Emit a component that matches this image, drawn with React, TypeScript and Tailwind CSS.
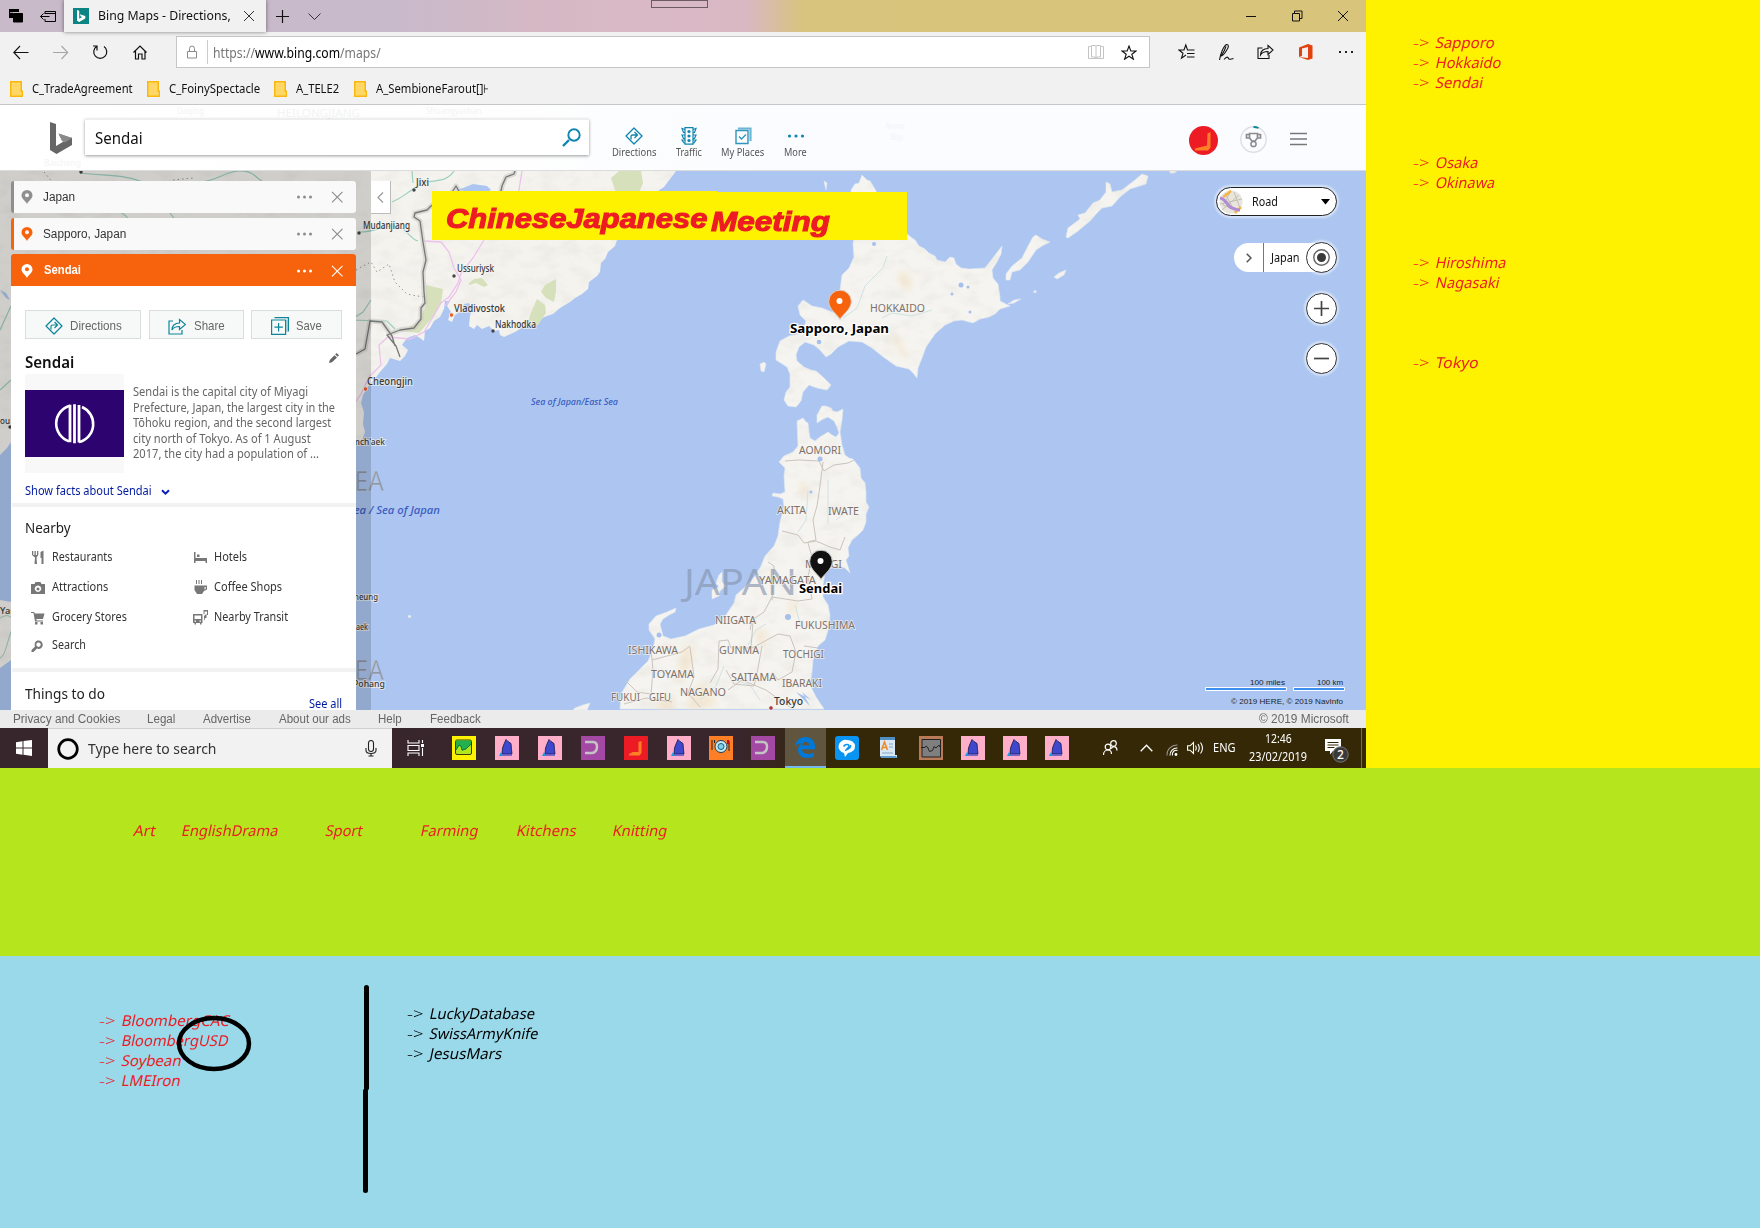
import { useLayoutEffect, useRef, useState } from "react";
import type { ReactNode } from "react";

/** Single-line text squeezed or stretched to an exact width. */
function Fit({ w, className = "", children }: { w: number; className?: string; children: ReactNode }) {
  const ref = useRef<HTMLSpanElement>(null);
  const [scale, setScale] = useState(1);
  useLayoutEffect(() => {
    if (ref.current && ref.current.offsetWidth) setScale(w / ref.current.offsetWidth);
  }, [w, children]);
  return (
    <span className={"block shrink-0 whitespace-nowrap " + className} style={{ width: w }}>
      <span ref={ref} className="inline-block origin-left" style={{ transform: `scaleX(${scale})` }}>
        {children}
      </span>
    </span>
  );
}

function Svg({ w, h, className = "", children }: { w: number; h: number; className?: string; children: ReactNode }) {
  return (
    <svg width={w} height={h} viewBox={`0 0 ${w} ${h}`} fill="none" className={"block shrink-0 " + className}>
      {children}
    </svg>
  );
}

/* ---------- Browser chrome ---------- */

function TitleBar() {
  return (
    <div className="relative flex h-8 items-center bg-[linear-gradient(90deg,#c8bac9_0px,#c9bacb_400px,#d4b8c4_530px,#dab9c6_640px,#d9b8c4_745px,#d8c47c_805px,#d8c57b_1366px)]">
      <Svg w={15} h={14} className="ml-[9px]">
        <path d="M0 0h10v3H4v6H0z" fill="#000" />
        <path d="M4.500 4.500h9v8.500h-9z" fill="#000" stroke="#000" />
        <path d="M1 3.500h8" stroke="#c9bacb" strokeWidth=".8" />
      </Svg>
      <Svg w={16} h={12} className="ml-4">
        <path d="M5 4V1.500h10.500v10H5V9M5 3.500h10M.500 6.500h9M3.500 3.500l-3 3 3 3" stroke="#000" />
      </Svg>
      <div className="ml-2 flex h-8 w-[202px] items-center bg-[#f1f1f1] shadow-[0_0_4px_rgba(0,0,0,0.5)]">
        <Svg w={16} h={16} className="ml-[9px]">
          <path d="M0 0h16v16H0z" fill="#0c8484" />
          <path d="M4 2l2.200.800v8l3-1.700-1.500-.700L6.900 6.200 12.300 8v2.600L6.200 14 4 12.800z" fill="#fff" />
        </Svg>
        <Fit w={133} className="ml-[9px] text-[13px] text-[#111]">Bing Maps - Directions,</Fit>
        <Svg w={10} h={10} className="ml-[13px]">
          <path d="M0 0l10 10M10 0L0 10" stroke="#333" />
        </Svg>
      </div>
      <Svg w={13} h={13} className="ml-2.5">
        <path d="M6.500 0v13M0 6.500h13" stroke="#111" strokeWidth="1.200" />
      </Svg>
      <Svg w={13} h={7} className="ml-[19px]">
        <path d="M.5.5l6 6 6-6" stroke="#333" />
      </Svg>
      <div className="absolute -top-px left-[651px] h-[9px] w-[57px] border border-[#6d5b63]" />
      <div className="absolute left-[651px] top-0 h-px w-[57px] bg-[#6d5b63]" />
      <Svg w={104} h={12} className="ml-auto mr-[17px]">
        <path d="M1 6.500h10M47.500 3.500h7v7.500H47.500zM49.500 3V1H57v7.500h-2M93 1l10 10M103 1l-10 10" stroke="#111" />
      </Svg>
    </div>
  );
}

function AddressRow() {
  return (
    <div className="flex h-10 items-start bg-[#f1f1f1]">
      <Svg w={135} h={15} className="ml-[13px] mt-[13px]">
        <path d="M1 7.500h14.500M7 1L.800 7.500 7 14" stroke="#111" strokeWidth="1.100" />
        <path d="M40 7.500h14.500M48.500 1l6.200 6.500-6.200 6.500" stroke="#a5a5a5" strokeWidth="1.100" />
        <path d="M83.500 1.500a6.500 6.500 0 1 0 7.500 0M84 5.500V1h-4" stroke="#111" strokeWidth="1.200" />
        <path d="M120.500 7.500L127 1l6.500 6.500M122.500 6v8h3V9h3.500v5h3V6" stroke="#111" strokeWidth="1.200" />
      </Svg>
      <div className="ml-7 mt-1 flex h-8 w-[974px] items-center border border-[#c6c6c6] bg-white">
        <Svg w={10} h={14} className="ml-2.5">
          <path d="M.5 6.500h9v6.500h-9zM2.500 6V3.500a2.500 2.500 0 0 1 5 0V6" stroke="#8a8a8a" />
        </Svg>
        <div className="ml-2.5 h-6 w-px bg-[#ccc]" />
        <Fit w={168} className="ml-[5px] text-[14px] text-[#777]">
          https://<span className="text-black">www.bing.com</span>/maps/
        </Fit>
        <Svg w={16} h={14} className="ml-auto">
          <path d="M.5 1.500h3V.500h4l.500 1 .500-1h4v1h3v12H.500zM3.500 1.500v10.500h4l.500 1 .500-1h4V1.500M8 1.500v11" stroke="#c4c4c4" />
        </Svg>
        <Svg w={16} h={15} className="ml-[17px] mr-3">
          <path d="M8 1l1.800 5h5.200l-4.200 3.200 1.600 5L8 11.200l-4.400 3 1.600-5L1 6h5.200z" stroke="#111" strokeWidth="1.100" />
        </Svg>
      </div>
      <Svg w={178} h={18} className="ml-7 mt-[11px]">
        <path d="M14 7H9.500L7.800 2 6 7H1l4 3.200-1.500 5L8 12M10 7h6.500M9 10.500h7.500M9 14h7.500" stroke="#111" strokeWidth="1.100" />
        <path d="M41.500 17c1-6 4-14 7-15.500 2.500 0 2.500 2.500 0 6-2 3.500-4.500 5.500-6 5.500M43 13.500c2.500-4 4-7 5-10M46 16.500c3-3.500 4-2.500 4.500-1s2 .500 5 0" stroke="#111" strokeWidth="1.100" />
        <path d="M84.500 5H80v10.500h11V12M82.500 12c0-4 3-6.500 7.500-6.500v-3l5 4.500-5 4.500v-3c-3.500 0-6 1-7.500 3.500z" stroke="#111" strokeWidth="1.100" />
        <path d="M121 4.500l9-3.500 4.500 1.500v13l-4.500 1.500-9-3 9 1V4l-6 1.500V13l-3 1z" fill="#e2420f" />
        <path d="M161 9h2M167 9h2M173 9h2" stroke="#222" strokeWidth="2" />
      </Svg>
    </div>
  );
}

function Bookmark({ w, gap, children }: { w: number; gap: string; children: string }) {
  return (
    <div className={"flex items-center " + gap}>
      <Svg w={13} h={16}>
        <path d="M.750.750h10.500v9.500h1.200v5H.750z" fill="#ffd766" stroke="#f9b80b" strokeWidth="1.500" />
      </Svg>
      <Fit w={w} className="ml-[9px] text-[12px] leading-4 text-[#111]">{children}</Fit>
    </div>
  );
}

/* ---------- Bing header ---------- */

function Tool({ w, label, gap, children }: { w: number; label: string; gap: string; children: ReactNode }) {
  return (
    <div className={"flex flex-col items-center " + gap}>
      <Svg w={18} h={18}>{children}</Svg>
      <Fit w={w} className="text-[10px] leading-[14px] text-[#555]">{label}</Fit>
    </div>
  );
}

const directionsIcon = (
  <>
    <path d="M9 1l8 8-8 8-8-8z" strokeLinejoin="round" />
    <path d="M6 12.500V9.500c0-1 .500-1.500 1.500-1.500H12M9.500 5l3 3-3 3" />
  </>
);

function BingHeader() {
  return (
    <div className="relative flex h-[66px] items-start border-b border-[#dcdcdc] bg-[linear-gradient(90deg,#ffffff_0px,#fefefe_500px,#fafcff_760px,#fafcff_1366px)]">
      <svg className="absolute left-0 top-0" width="1366" height="65" viewBox="0 105 1366 65" fontFamily="Noto Sans, sans-serif">
        <g fill="#f3f4f5" fontSize="8">
          <text x="177" y="114">Daqing</text>
          <text x="277" y="117" fontSize="10" textLength="83" lengthAdjust="spacingAndGlyphs">HEILONGJIANG</text>
          <text x="44" y="166" textLength="37" lengthAdjust="spacingAndGlyphs">Baicheng</text>
          <text x="426" y="114">Shuangyashan</text>
          <text x="885" y="129" fontStyle="italic">Aniva</text>
          <text x="890" y="140" fontStyle="italic">Bay</text>
        </g>
      </svg>
      <Svg w={23} h={33} className="relative ml-[50px] mt-[17px]">
        <path d="M8.500 11.500L22 16v6l-7.500-3-3-1.500z" fill="#8a8a8a" />
        <path d="M0 0l6 2v22l8.500-5L22 15.500V23L6.500 32 0 28z" fill="#666" />
        <path d="M8.500 11.500L22 16l-7 4.500-3-1.500z" fill="#8a8a8a" />
      </Svg>
      <div className="relative ml-3 mt-3.5 flex h-9 w-[504px] items-center border-t border-[#eee] bg-white shadow-[0_1px_3px_rgba(0,0,0,0.4)]">
        <Fit w={48} className="ml-2.5 text-[16px] text-[#111]">Sendai</Fit>
        <Svg w={19} h={19} className="ml-auto mr-2">
          <path d="M7 12L1 18" stroke="#0f85b0" strokeWidth="2.400" />
          <circle cx="12" cy="7" r="5.700" stroke="#0f85b0" strokeWidth="1.900" />
        </Svg>
      </div>
      <div className="relative mt-[22px] flex">
        <Tool w={44} label="Directions" gap="ml-[23px]">
          <g stroke="#0f85b0" strokeWidth="1.300">{directionsIcon}</g>
        </Tool>
        <Tool w={26} label="Traffic" gap="ml-[20px]">
          <path d="M5 .700h8v16.500H5zM5 2.500L2 1.500l1.500 4H5M5 8H2l1.500 3.500H5M5 13H2l2 3h1M13 2.500l3-1-1.500 4H13M13 8h3l-1.500 3.500H13M13 13h3l-2 3h-1" stroke="#0f85b0" strokeWidth="1.200" />
          <g fill="#0f85b0"><circle cx="9" cy="4.500" r="1.600" /><circle cx="9" cy="9" r="1.600" /><circle cx="9" cy="13.500" r="1.600" /></g>
        </Tool>
        <Tool w={43} label="My Places" gap="ml-[19px]">
          <path d="M4 1.500h12.500V14" stroke="#6db6d3" strokeWidth="2.200" />
          <path d="M2 3.500h12v13H2zM5 9.500l2.500 2.500L12 7.500" stroke="#2f95bc" strokeWidth="1.400" />
        </Tool>
        <Tool w={23} label="More" gap="ml-[20px]">
          <g fill="#0f85b0"><circle cx="2.500" cy="9" r="1.600" /><circle cx="9" cy="9" r="1.600" /><circle cx="15.500" cy="9" r="1.600" /></g>
        </Tool>
      </div>
      <Svg w={30} h={30} className="relative ml-auto mt-[21px]">
        <circle cx="14.500" cy="14.500" r="14.500" fill="#ed1c24" />
        <path d="M18.500 7.500l3-1.500v15.500L19 24.500 6 24.500V22.500L14 20.500l4-1z" fill="#ff7f27" />
      </Svg>
      <Svg w={27} h={27} className="relative ml-[21px] mt-[21px]">
        <circle cx="13.500" cy="13.500" r="12.700" stroke="#dcdfe1" strokeWidth="1.400" />
        <path d="M13.500 1a12 12 0 0 1 5 1" stroke="#0d8795" strokeWidth="1.800" />
        <path d="M9.500 7.500h8V12l-2.500 3h-3l-2.500-3zM9.500 8.500h-3v3.500h3M17.500 8.500h3v3.500h-3" stroke="#8b8b8b" strokeWidth="1.700" />
        <circle cx="13.500" cy="18" r="2.600" stroke="#8b8b8b" strokeWidth="1.500" />
      </Svg>
      <Svg w={17} h={14} className="relative ml-[23px] mr-[59px] mt-[27px]">
        <path d="M0 1.500h17M0 7h17M0 12.500h17" stroke="#777" strokeWidth="1.500" />
      </Svg>
    </div>
  );
}

/* ---------- Map ---------- */

const PREFECTURES: [string, number, number, number][] = [
  ["HOKKAIDO", 870, 312, 55],
  ["AOMORI", 799, 454, 42],
  ["AKITA", 777, 514, 29],
  ["IWATE", 828, 515, 31],
  ["MIYAGI", 805, 568, 37],
  ["YAMAGATA", 759, 584, 57],
  ["NIIGATA", 715, 624, 41],
  ["FUKUSHIMA", 795, 629, 60],
  ["ISHIKAWA", 628, 654, 50],
  ["GUNMA", 719, 654, 40],
  ["TOCHIGI", 783, 658, 41],
  ["TOYAMA", 651, 678, 43],
  ["SAITAMA", 731, 681, 45],
  ["IBARAKI", 782, 687, 40],
  ["NAGANO", 680, 696, 46],
  ["FUKUI", 611, 701, 29],
  ["GIFU", 649, 701, 22],
];

const CITIES: [string, number, number, number, number][] = [
  ["Jixi", 416, 186, 13, 11],
  ["Mudanjiang", 363, 229, 47, 11],
  ["Ussuriysk", 457, 272, 37, 11],
  ["Vladivostok", 454, 312, 51, 11],
  ["Nakhodka", 495, 328, 41, 11],
  ["Cheongjin", 367, 385, 46, 11],
  ["mch'aek", 352, 445, 33, 10],
  ["neung", 354, 600, 24, 10],
  ["aek", 356, 630, 12, 10],
  ["Pohang", 353, 687, 32, 10],
  ["Tokyo", 774, 705, 29, 11],
  ["ou", 0, 424, 10, 10],
  ["Yan", 0, 614, 16, 10],
];

function MapCanvas() {
  return (
    <svg className="absolute inset-0" width="1366" height="539" viewBox="0 171 1366 539" fontFamily="Noto Sans, sans-serif" fill="none">
      <defs>
        <filter id="relief" x="0" y="0" width="100%" height="100%">
          <feTurbulence type="fractalNoise" baseFrequency="0.05 0.09" numOctaves="3" seed="4" result="n" />
          <feColorMatrix in="n" type="matrix" values="0 0 0 0 0.66  0 0 0 0 0.63  0 0 0 0 0.57  0.6 0 0 0 -0.27" result="c" />
          <feComposite in="c" in2="SourceGraphic" operator="in" result="r" />
          <feMerge><feMergeNode in="SourceGraphic" /><feMergeNode in="r" /></feMerge>
        </filter>
        <filter id="soft"><feGaussianBlur stdDeviation="3" /></filter>
      </defs>
      <path d="M0 171h1366v539H0z" fill="#acc6f1" />
      <g fill="#f4f3ee" filter="url(#relief)">
        <path d="M0 171H676L670 179 664 187 655 193 640 215 625 233 617 240 615 246 608 252 605 259 601 263 600 272 597 276 593 279 589 282 588 289 582 294 575 298 570 302 560 308 553 314 547 316 540 319 535 323 525 326 515 332 504 337 500 335 499 330 494 331 489 326 482 329 477 325 474 329 469 326 470 316 472 309 469 303 464 304 461 311 455 315 452 322 448 320 451 312 447 306 450 301 445 301 444 309 440 317 434 321 430 328 425 331 424 341 420 338 415 335 407 338 402 345 408 350 405 356 400 361 390 358 387 364 380 372 373 381 367 388 363 395 361 403 364 412 363 424 365 432 362 440 350 442H11L7 448 0 455z" />
        <path d="M0 600l11 2v58l-11 8z" />
      </g>
      <path d="M611 178l8-7h22l2 12-5 12-10 4-12-6zM426 285l17 4-2 14-8 14-14 16-16-2 16-10 7-16zM468 284l6-5 8-1 6 7-4 2-8-4-6 2zM541 292l4-7 11-6v13l-2 10-8-4zM527 327l3-12 7-16 8 6 1 8-8 12z" fill="#d6e0ba" />
      <path d="M455 190l8-2 10-4 14 2 4 4-6 3zM0 290l6 8 4 2-4-7z" fill="#acc6f1" />
      <g stroke="#9dcfc0" strokeWidth="1.200">
        <path d="M392 202c10-4 13-8 20-12l9-7c15-3 26-1 33-12M412 171l1 12M80 173c30 3 45 2 60 8 15 5 35 0 60 1 20-2 25-11 40-11s15 7 22 10M360 232c15 0 20-6 33-6 14 0 15 12 25 15M371 300l-8 12-12 8 36 1 8 8M120 212c10 5 8 9 14 14M0 330l11-24M0 390l11-10M170 213l6 8" />
      </g>
      <g stroke="#ecc2ec" strokeWidth="1.300">
        <path d="M522 171l-4 25M484 240l-11 18-12 15-3 10-9 14-8 6-8 14-9 15-14 7-22-2-9 8 2 20-12 12-8 17-9 13-4 12 4 14-5 8M424 241l17 1 8 10 5 16 7 12-5 12-11 14" />
      </g>
      <path d="M44 172l10 12 12 2M140 182l15 6 18-8 20-2M356 270l7-4 8-4 6 10 12-8 6 18 12 12 10 2 10 1" stroke="#999" strokeDasharray="1.500 3" />
      <g stroke="#c9c9c5" strokeWidth="5" strokeLinejoin="round" opacity=".6">
        <path d="M515 171l-1 3-8 3-4 9-2 10M464 200l-8-14-5 8-20 12-4 4-12 3-1 4 6 4 3 21 3 18-3 12 1 20 1 11-4 5v11l-7 9-14 2-13 5M356 354l9-5 5-28 12 1 10 14" />
      </g>
      <path d="M515 171l-1 3-8 3-4 9-2 10M464 200l-8-14-5 8-20 12-4 4-12 3-1 4 6 4 3 21 3 18-3 12 1 20 1 11-4 5v11l-7 9-14 2-13 5 9 11 4 11M356 354l9-5 5-28 12 1 10 14 3 10" stroke="#777" strokeWidth="1.300" strokeLinejoin="round" />

      <g fill="#f5f4f0" filter="url(#relief)" stroke="#e3e9f0" strokeWidth=".6" strokeLinejoin="round">
        <path d="M851 190L855 184 859 183 862 175 867 180 870 181 875 189 887 214 906 233 912 238 915 240 919 246 925 249 929 253 935 256 937 260 945 262 950 257 954 258 956 264 961 268 969 269 985 268 992 259 1002 246 1001 254 997 262 992 270 993 278 998 284 1000 297 1000 301 1010 306 1000 309 995 314 989 317 980 319 973 323 962 320 954 321 945 325 935 334 926 347 922 358 918 368 917 378 913 373 909 369 896 366 882 356 872 348 862 342 849 341 838 347 831 354 826 357 820 350 814 345 805 342 799 347 796 355 797 361 804 367 811 370 816 371 823 377 831 385 827 390 817 388 809 385 803 392 801 401 796 407 788 406 784 400 786 392 790 387 790 374 787 367 776 360 776 352 780 341 789 336 799 334 804 327 806 321 800 315 798 306 803 300 812 306 822 308 832 312 840 314 842 302 840 290 842 275 849 268 854 257 853 244 856 225 853 206z" />
        <path d="M797 421l6-3 3 4 2 1 1 9 1 6 5 3 5-4 8-5 4 3 4 2 3-4-2-6-3-6-6-4-5 2-6 4 0-8 5-9 4 0 5 2 2 3 4 1 6-3-1 11-2 12 2 13 3 10 4 3 4 1 3 4 4 5 1 10 4 5 1 9 0 10 3 5-3 7 0 8-3 8-5 5-6 5-4 8 1 8-3 4 4 13-5-5-7-3-8 2-5 6-2 12 0 12 5 8 2 10-1 12-4 13-7 6-5 14-1 12-2 13 6 12 8 12H620l1-15 9-15 10-10 8-8 5-12 2-10-6-9 0-6 7-8 11-4 9-4-1 4-6 3-6 4-3 5 3 12 8 3 14-3 14-7 15-4 12-10 8-12 2-8 8-7 11-12 6-10 4-10 9-10 4-10 2-14 4-15-1-8-5-2-6-1 1-3 7 1 5-2-1-16 1-8-6-6 5-6 9-4 5-6z" />
        <path d="M712 590l7-3-3-4 3-8 3-3v10l4 4-6 5-1 5-7 3z" />
        <path d="M1006 280v-6l6-8 10-8 6-12 5-9 3-2 6 4 8 3-8 4-6 4-8 12-8 8-8 2-2 8zM1066 237l2-9 12-9-2-4 7-2 8-10 7-3 6-8v-10l4 2 2 8 10-2 13-10 7-6 6 2-2 8-16 5-10 8-8 9-10 2-5 5-7 8-12 10-10 7zM1054 277l5-4 7-3-2 5-7 4zM1008 304l6-4 7-1-7 4zM1033 292l3-2v3zM1170 171h7l-3 2h-4z" />
        <path d="M760 364l4-2 2 2-2 8-3-1zM824 181l3 2-1 7zM575 708l8-3 7-2-3 7h-14zM408 616l2-1 1 2-2 1z" />
      </g>
      <g fill="#f3dfbf" opacity=".55" filter="url(#soft)">
        <path d="M900 270l8 4 5 12-7 4-8-8zM890 335l8 2 12 24-8-6zM682 648l10-4 2 14-8 20-10 6zM755 630l8-2 4 14-8 6zM690 690l14-8 14 24-30 4zM800 482l6 0 2 12-6 2zM660 700l14-6 0 16h-20zM790 600l6 2-2 14-6 0z" />
      </g>
      <g stroke="#cfe3e2" strokeWidth="1">
        <path d="M843 318l14-10 8-22 18-18 4-12M882 318l10-5 20 3 20-6M808 490l-2 30-8 12M828 480v44M836 520l10-8M748 645l8-15 10-6M700 700l16-14 8-20M760 700l-10-15-12-4M795 605l6 22" />
      </g>
      <g stroke="#cbc4bd" strokeWidth="1">
        <path d="M785 461l14-1 20 1 5 10 10-6 14-2 6-3M823 462l-3 24-3 20-4 14 3 20-8 2M782 531l16 4 6 8 12-2 14 6 10 3 5-13M808 543l4 14-4 20 4 22-14 2-26-4-8 15-12 8-2 10M768 562l6 4-2 34M753 622l-2 26-20 0-3-8-9 1-1 28-8 14M752 648l26-14 12 2 6 16-4 20-14 8-6-8M804 646l14 2M726 670l8 14 20 2 4-18 4-22M651 650l2 20-2 24-14-2-12-12M652 660l30-8 8-6M690 647l4 30-6 16 12 14M728 690l14-10 24 10 28 20M624 704l22-6 26 4" />
      </g>
      <g fill="#a6c0ec">
        <circle cx="961" cy="285" r="2.500" /><circle cx="968" cy="287" r="1.500" /><circle cx="874" cy="244" r="2" /><circle cx="819" cy="342" r="2.300" /><circle cx="820" cy="459" r="2.500" /><circle cx="788" cy="617" r="3" /><circle cx="811" cy="492" r="1.500" /><circle cx="659" cy="635" r="2.500" /><circle cx="952" cy="294" r="1.500" /><circle cx="970" cy="312" r="1.500" />
        <path d="M796 692l14 14-8-14 9 8z" />
      </g>
      <path d="M0 618c10-6 16 0 11 14s-6 24-11 26" stroke="#9dcfc0" />

      <text x="684" y="595" fontSize="37" textLength="113" lengthAdjust="spacingAndGlyphs" fill="#8593ad" fillOpacity=".65">JAPAN</text>
      <g fontSize="28" fill="#8d98ad" stroke="#c2cddf" strokeWidth=".5">
        <text x="341" y="491" textLength="43" lengthAdjust="spacingAndGlyphs">SEA</text>
        <text x="341" y="680" textLength="43" lengthAdjust="spacingAndGlyphs">SEA</text>
      </g>
      <g fontSize="11" fill="#7d716b" stroke="#f5f4f0" strokeOpacity=".8" strokeWidth="1.500" paintOrder="stroke">
        {PREFECTURES.map(([name, x, y, w]) => (
          <text key={name} x={x} y={y} textLength={w} lengthAdjust="spacingAndGlyphs">{name}</text>
        ))}
      </g>
      <g fill="#3a3a3a" stroke="#f3f3f0" strokeOpacity=".7" strokeWidth="2" paintOrder="stroke">
        {CITIES.map(([name, x, y, w, size]) => (
          <text key={name} x={x} y={y} fontSize={size - 1} textLength={w} lengthAdjust="spacingAndGlyphs" fontWeight="500">{name}</text>
        ))}
      </g>
      <g fill="#444">
        <circle cx="414" cy="190" r="1.700" /><circle cx="359" cy="233" r="1.700" /><circle cx="454" cy="276" r="1.700" /><circle cx="493" cy="331" r="1.700" /><circle cx="81" cy="172" r="1.700" /><circle cx="10" cy="427" r="1.700" />
      </g>
      <g fill="#e8622a" stroke="#fff" strokeWidth=".7">
        <circle cx="451.500" cy="315" r="2.200" /><circle cx="365.500" cy="389" r="2.200" /><circle cx="771" cy="708" r="2.200" fill="#a33" />
      </g>
      <g fill="#3a5cc0" fontStyle="italic" fontWeight="500">
        <text x="531" y="405" fontSize="9" textLength="87" lengthAdjust="spacingAndGlyphs">Sea of Japan/East Sea</text>
        <text x="348" y="514" fontSize="10.500" textLength="92" lengthAdjust="spacingAndGlyphs">Sea / Sea of Japan</text>
      </g>
      <g strokeWidth="1">
        <path d="M840 319.500c-2-4.500-11.300-10-11.300-18a11.300 11.300 0 0 1 22.600 0c0 8-9.300 13.500-11.300 18z" fill="#f7630c" stroke="#d9cfc6" />
        <circle cx="839.500" cy="301" r="3" fill="#fff" />
        <path d="M821 579.500c-2-4.500-11.300-10-11.300-18a11.300 11.300 0 0 1 22.600 0c0 8-9.300 13.500-11.300 18z" fill="#111" stroke="#ccc" />
        <circle cx="820.500" cy="561" r="3" fill="#fff" />
      </g>
      <g fontSize="12.500" fontWeight="700" fill="#000" stroke="#fff" strokeWidth="2.500" paintOrder="stroke">
        <text x="790" y="333" textLength="99" lengthAdjust="spacingAndGlyphs">Sapporo, Japan</text>
        <text x="799" y="593" textLength="43" lengthAdjust="spacingAndGlyphs">Sendai</text>
      </g>
      <g fontFamily="Liberation Sans, sans-serif" fontSize="8" fill="#222">
        <text x="1250" y="685" textLength="35" lengthAdjust="spacingAndGlyphs">100 miles</text>
        <text x="1317" y="685" textLength="26" lengthAdjust="spacingAndGlyphs">100 km</text>
        <text x="1231" y="704" textLength="112" lengthAdjust="spacingAndGlyphs">© 2019 HERE, © 2019 NavInfo</text>
      </g>
      <g fill="#3c8ff0" stroke="#fff">
        <path d="M1205.500 687.500h81v3h-81zM1293.500 687.500h51v3h-51z" />
      </g>
    </svg>
  );
}

function PinCard({ label, w, tone, pin }: { label: string; w: number; tone: string; pin: string }) {
  const active = tone === "active";
  const mark = active ? "#fff" : "#8c8c8c";
  return (
    <div
      className={
        "flex h-8 w-[345px] shrink-0 items-center " +
        (active
          ? "rounded-t-[3px] border-l-[3px] border-[#f7630c] bg-[#f7630c] pt-px font-bold text-white"
          : "mb-[5px] rounded-[3px] border-l-[3px] bg-[#f9f9f9] text-[#333] " + tone)
      }
    >
      <Svg w={12} h={14} className="ml-[7px]">
        <path d="M6 14C4.500 10.500.500 9 .500 5.500a5.500 5.500 0 0 1 11 0C11.500 9 7.500 10.500 6 14z" fill={pin} />
        <circle cx="6" cy="5.300" r="2" fill={active ? "#f7630c" : "#f9f9f9"} />
      </Svg>
      <Fit w={w} className={"font-['Liberation_Sans'] text-[12.500px] " + (active ? "ml-[11px]" : "ml-2.5")}>{label}</Fit>
      <Svg w={46} h={12} className="ml-auto mr-[13px]">
        <g fill={mark}><circle cx="1.500" cy="6" r="1.500" /><circle cx="7.500" cy="6" r="1.500" /><circle cx="13.500" cy="6" r="1.500" /></g>
        <path d="M35 .800l10.500 10.500M45.500.800L35 11.300" stroke={mark} strokeWidth="1.100" />
      </Svg>
    </div>
  );
}

function ActionButton({ width, text, label, pad, gap, children }: { width: string; text: number; label: string; pad: string; gap: string; children: ReactNode }) {
  return (
    <div className={"flex h-[29px] items-center border border-[#d9dddd] bg-[#f7f9f9] pt-0.5 " + width + " " + pad}>
      <Svg w={18} h={18}>
        <g stroke="#0d8599" strokeWidth="1.200">{children}</g>
      </Svg>
      <Fit w={text} className={"font-['Liberation_Sans'] text-[13px] text-[#666] " + gap}>{label}</Fit>
    </div>
  );
}

function Place({ w, label, children }: { w: number; label: string; children?: ReactNode }) {
  return (
    <div className="flex w-[162px] items-center">
      <Svg w={17} h={16}>{children}</Svg>
      <Fit w={w} className="ml-1 text-[12px] text-[#333]">{label}</Fit>
    </div>
  );
}

function SidePanel() {
  return (
    <div className="relative flex h-full w-[371px] flex-col bg-black/15 pl-[11px] pt-2.5">
      <PinCard label="Japan" w={32} tone="border-[#8f8f8f]" pin="#8f8f8f" />
      <PinCard label="Sapporo, Japan" w={83} tone="border-[#f7630c]" pin="#f7630c" />
      <div className="-mt-px" />
      <PinCard label="Sendai" w={37} tone="active" pin="#fff" />
      <div className="h-[424px] w-[345px] overflow-hidden bg-white pl-3.5">
        <div className="mt-6 flex">
          <ActionButton width="w-[116px]" text={52} label="Directions" pad="pl-[19px]" gap="ml-[7px]">{directionsIcon}</ActionButton>
          <div className="w-2" />
          <ActionButton width="w-[95px]" text={31} label="Share" pad="pl-[18px]" gap="ml-2">
            <path d="M5 4H1v13h13v-4M4 13c0-4.500 3-7 7.500-7V2.500l6 5-6 5V9.500C8 9.500 5.500 10 4 13z" />
          </ActionButton>
          <div className="w-[7px]" />
          <ActionButton width="w-[91px]" text={26} label="Save" pad="pl-[19px]" gap="ml-[7px]">
            <path d="M3.500.600H17.400V14.500M.600 3h14v14.400H.600zM7.600 6v8.500M3.400 10.200h8.500" />
            <path d="M16 3v12" opacity=".4" />
          </ActionButton>
        </div>
        <div className="mt-3 flex h-[22px] items-center">
          <Fit w={49} className="text-[16px] font-semibold text-[#111]">Sendai</Fit>
          <Svg w={10} h={10} className="mb-2 ml-[255px]">
            <path d="M0 10l.800-3L5.500 2.200 8 4.500 3 9.300zM6.200 1.500L7.500 0 10 2.200 8.700 3.800z" fill="#666" />
          </Svg>
        </div>
        <div className="mt-px flex h-[99px]">
          <div className="flex w-[99px] flex-col justify-center bg-[#f8f8f8]">
            <Svg w={99} h={67}>
              <path d="M0 0h99v67H0z" fill="#2d036f" />
              <g stroke="#fff" strokeWidth="2.600">
                <path d="M45 15.700a18.500 18.500 0 0 0-1 35.500M57 17a18.500 18.500 0 0 1-3 35" />
                <path d="M45 14.700v37.500M49.500 14.200v39M54 15v37.600" strokeWidth="2.800" />
              </g>
            </Svg>
          </div>
          <div className="ml-[9px] mt-2.5 text-[12px] leading-[15.500px] text-[#666]">
            <Fit w={175}>Sendai is the capital city of Miyagi</Fit>
            <Fit w={202}>Prefecture, Japan, the largest city in the</Fit>
            <Fit w={198}>Tōhoku region, and the second largest</Fit>
            <Fit w={178}>city north of Tokyo. As of 1 August</Fit>
            <Fit w={186}>2017, the city had a population of ...</Fit>
          </div>
        </div>
        <div className="mt-2.5 flex h-4 items-center">
          <Fit w={127} className="text-[12px] text-[#001ba0]">Show facts about Sendai</Fit>
          <Svg w={9} h={7} className="ml-[9px] mt-0.5">
            <path d="M1 1.200l3.500 3.500L8 1.200" stroke="#0a1fc0" strokeWidth="2" />
          </Svg>
        </div>
        <div className="-ml-[13px] mt-1 h-1 bg-[#f2f2f2]" />
        <Fit w={46} className="mt-[11px] text-[14px] leading-5 text-[#222]">Nearby</Fit>
        <div className="ml-1.5 mt-1 grid h-[120px] grid-cols-[162px_161px] grid-rows-[30px_30px_30px_26px] [&_path]:fill-[#777]">
          <Place w={60} label="Restaurants">
            <path d="M1 2h1.300v4h1.200V2h1.300v4H6V2h1.300v4L5.500 8.500 6 15H3.500L4 8.500 1 6zM9.500 3l3-1.500V15h-2V9h-1z" />
          </Place>
          <Place w={33} label="Hotels">
            <path d="M1 3h1.500v6H14v5h-1.500v-2h-10v2H1zM4 5.500h2.500V8H4zM3 9h10v3H3z" />
          </Place>
          <Place w={56} label="Attractions">
            <path d="M0 5h3.500l1-2h5l1 2H14v10H0zM7 6.500a3.200 3.200 0 1 0 .010 0zM7 8.500a1.500 1.500 0 1 1-.010 0z" fillRule="evenodd" />
          </Place>
          <Place w={68} label="Coffee Shops">
            <path d="M3 1h1v4H3zM5.500 1h1v4h-1zM8 1h1v4H8zM1.500 6.500H14v4l-3 1.500-2 3H4L1.500 11zM11.500 8v2.500l1.200-.800V8z" fillRule="evenodd" />
          </Place>
          <Place w={75} label="Grocery Stores">
            <path d="M0 3h3l1 1.500h9.500L12 10H5.500v1.500H12v1H4L2.500 4H0zM4 13h2.500v2.500H4zM9.500 13H12v2.500H9.500z" />
          </Place>
          <Place w={74} label="Nearby Transit">
            <path d="M0 5h9.500v9h-1v1.500H7V14H3v1.500H1.500V14H0zM1.500 6.500V10H8V6.500zM1.500 11.500v1.200H3v-1.200zM6.500 11.500v1.200H8v-1.200zM10.500 1H15v5h-1.500v3h-1.300L11 12V7l1.500-1.500H14V2.500h-2.500V5h-1z" fillRule="evenodd" />
          </Place>
          <Place w={34} label="Search">
            <path d="M7.500 3.500a4.200 4.200 0 1 1 0 8.500L6 11.500 2.500 15H.500v-2L4 9.500C3 6 4.500 3.500 7.500 3.500zM7.500 5.500a2.200 2.200 0 1 0 .010 0z" fillRule="evenodd" />
          </Place>
        </div>
        <div className="-ml-[13px] mt-1.5 h-1 bg-[#f2f2f2]" />
        <div className="flex">
          <Fit w={80} className="mt-3 text-[14px] leading-5 text-[#222]">Things to do</Fit>
          <Fit w={33} className="ml-[204px] mt-[26px] text-[12px] leading-3 text-[#001ba0]">See all</Fit>
        </div>
      </div>
    </div>
  );
}

function RoundButton({ className, children }: { className: string; children: ReactNode }) {
  return (
    <div className={"flex size-[31px] items-center justify-center rounded-full border-[1.500px] border-[#333] bg-white shadow-[0_0_2px_2px_rgba(255,255,255,0.5)] " + className}>
      <Svg w={17} h={17}>{children}</Svg>
    </div>
  );
}

function MapArea() {
  return (
    <div className="relative flex h-[539px] overflow-hidden">
      <MapCanvas />
      <SidePanel />
      <div className="relative mt-2.5 flex h-[33px] w-5 items-center justify-center border-b border-r border-[#bbb] bg-white">
        <Svg w={7} h={11}><path d="M6 .500L1 5.500l5 5" stroke="#999" strokeWidth="1.200" /></Svg>
      </div>
      <div className="absolute left-[432px] top-5 flex font-['Liberation_Sans'] text-[27.500px] font-bold italic text-[#ed1c24] [-webkit-text-stroke:1.100px_#ed1c24]">
        <div className="h-[49px] w-[285px] bg-[#fff200] pl-3.5">
          <Fit w={261} className="pt-[5px] leading-[46px]">ChineseJapanese</Fit>
        </div>
        <div className="mt-px h-12 w-[190px] bg-[#fff200]">
          <Fit w={119} className="-ml-[6px] pt-[7px] leading-[46px]">Meeting</Fit>
        </div>
      </div>
      <div className="absolute right-[29px] top-4 flex flex-col items-end">
        <div className="flex h-[29px] w-[121px] items-center rounded-full border-[1.500px] border-[#222] bg-white shadow-[0_0_2px_2px_rgba(255,255,255,0.5)]">
          <Svg w={24} h={24} className="ml-[2px]">
            <circle cx="12" cy="12" r="11.500" fill="#e8e5de" />
            <path d="M3 20L20 5M6 3l10 19M12 1l-8 14 16 6M1 14l22-5M15 2l6 16" stroke="#c4bfb2" />
            <path d="M4 7c4-2 5-4 8-6M22 17l-6 6" stroke="#f3b544" strokeWidth="2.500" />
            <path d="M1 8c7 1 7 9 12 10 3 1 5 2 8 2" stroke="#b28bd6" strokeWidth="3" />
          </Svg>
          <Fit w={26} className="ml-[9px] text-[12px] text-[#111]">Road</Fit>
          <Svg w={9} h={6} className="ml-auto mr-[6px]"><path d="M0 0h9L4.500 5.500z" fill="#000" /></Svg>
        </div>
        <div className="mt-[26px] flex h-[31px] items-center">
          <div className="-mr-3 flex h-[29px] items-center rounded-l-full bg-white pl-3 pr-3">
            <Svg w={6} h={10}><path d="M.700.700L5 5 .700 9.300" stroke="#555" strokeWidth="1.500" /></Svg>
            <div className="ml-[11px] h-[29px] w-px bg-[#777]" />
            <Fit w={29} className="ml-[7px] mr-1.5 text-[12px] text-[#111]">Japan</Fit>
          </div>
          <RoundButton className="relative">
            <circle cx="8.500" cy="8.500" r="7.700" stroke="#666" strokeWidth="1.400" />
            <circle cx="8.500" cy="8.500" r="4.500" fill="#3a3a3a" />
          </RoundButton>
        </div>
        <RoundButton className="mt-5"><path d="M8.500 1v15M1 8.500h15" stroke="#444" strokeWidth="1.700" /></RoundButton>
        <RoundButton className="mt-[19px]"><path d="M1 8.500h15" stroke="#444" strokeWidth="1.700" /></RoundButton>
      </div>
    </div>
  );
}

function PageFooter() {
  return (
    <div className="flex h-[18px] items-center bg-[#ebebeb] pl-[13px] pr-[17px] font-['Liberation_Sans'] text-[12px] text-[#666]">
      <Fit w={107}>Privacy and Cookies</Fit>
      <Fit w={28} className="ml-[27px]">Legal</Fit>
      <Fit w={48} className="ml-7">Advertise</Fit>
      <Fit w={72} className="ml-7">About our ads</Fit>
      <Fit w={24} className="ml-[27px]">Help</Fit>
      <Fit w={51} className="ml-[28px]">Feedback</Fit>
      <Fit w={90} className="ml-auto">© 2019 Microsoft</Fit>
    </div>
  );
}

/* ---------- Taskbar ---------- */

const hat = (
  <>
    <path d="M0 0h24v24H0z" fill="#ffaec9" />
    <path d="M11 3.500l2 2 3 2 .500 6 .500 4.500H7L7.500 12l1.500-4z" fill="#3f48cc" stroke="#14164f" strokeWidth=".8" />
    <path d="M5 18.500h12v1.200H5z" fill="#3f48cc" />
    <path d="M4 20l2-4 1.500 3.500z" fill="#00a2e8" />
  </>
);
const hook = (
  <>
    <path d="M0 0h24v24H0z" fill="#a349a4" />
    <path d="M4 6h8c3 0 4 2 4 5s-2 6-5 6H4" stroke="#c3c3c3" strokeWidth="2.500" />
  </>
);
const boot = (
  <>
    <path d="M0 0h24v24H0z" fill="#ed1c24" />
    <path d="M14.500 6l3-1v12l-2 2.500H5V18l4-2h5.500z" fill="#ff7f27" />
  </>
);
const chart = (
  <>
    <path d="M0 0h24v24H0z" fill="#fff200" />
    <rect x="3.500" y="4" width="16" height="14.500" rx="1.500" fill="#b5e61d" stroke="#3a3a10" />
    <path d="M4 4.500h15V9l-5 4-4 2-2-6-4 5z" fill="#22b14c" />
    <path d="M4 14l3-5 2 1 1 4 4-1 5-5" stroke="#1a7a33" />
  </>
);
const plate = (
  <>
    <path d="M0 0h24v24H0z" fill="#ff7f27" />
    <circle cx="12" cy="10.500" r="6" fill="#c3e9f5" stroke="#1b3a55" />
    <circle cx="12" cy="10.500" r="3" fill="#7fd0ea" stroke="#1b5a75" />
    <path d="M3 4v10M5.500 4v3M20 5v10" stroke="#222" />
    <path d="M19 4v4" stroke="#c01020" strokeWidth="2" />
  </>
);
const wave = (
  <>
    <path d="M0 0h24v24H0z" fill="#b97a57" />
    <path d="M3 3.500h18.500v17.500H3z" fill="#7f7f7f" stroke="#222" />
    <path d="M2 11.500h4l1-1.500 1.500 1 2 4.500 3-1 1.500-4 2 1.500 3-3 1 2" stroke="#222" />
  </>
);
const chat = (
  <>
    <rect width="24" height="24" rx="3" fill="#0a94f2" />
    <path d="M12 4a7.500 6.500 0 0 1 1 13l-3 4-1-4a6.800 6.500 0 0 1 3-13z" fill="#fff" />
    <path d="M8.500 10.500c2-3 5.500-2 5.500-.500s-2 2-3 4c3-1 5-3 4.500-5" stroke="#0a94f2" strokeWidth="1.500" />
  </>
);
const doc = (
  <>
    <path d="M3 1h15v18h2v3H5l-2-2z" fill="#d9e8f5" />
    <path d="M3 1h15v3H3z" fill="#4f8fc4" />
    <path d="M4.500 14l3-8 3 8M5.500 11.500h4" stroke="#f08a24" strokeWidth="1.600" />
    <path d="M12 8h4M12 11h4M5 17h11" stroke="#8aa7c0" />
    <path d="M3 20h16l1.500 2H5z" fill="#5b9bd0" />
  </>
);

function Tile({ gap, children }: { gap: string; children: ReactNode }) {
  return <Svg w={24} h={24} className={gap}>{children}</Svg>;
}

function Taskbar() {
  return (
    <div className="flex h-10 items-center bg-[linear-gradient(90deg,#38262d_0px,#38262c_740px,#352808_830px,#352807_1366px)] text-white">
      <Svg w={16} h={16} className="ml-4">
        <path d="M0 2.300l6.500-1v6.200H0zM7.500 1.100L16 0v7.500H7.500zM0 8.500h6.500v6.200l-6.500-1zM7.500 8.500H16V16l-8.500-1.200z" fill="#fff" />
      </Svg>
      <div className="ml-4 flex h-10 w-[344px] items-center border-t border-[#d0d0d0] bg-[#f2f2f2]">
        <Svg w={22} h={22} className="ml-[9px]"><circle cx="11" cy="11" r="9.300" stroke="#000" strokeWidth="2.700" /></Svg>
        <Fit w={128} className="ml-[9px] text-[14.500px] text-[#333]">Type here to search</Fit>
        <Svg w={12} h={17} className="ml-auto mr-[15px]">
          <path d="M3.500 3a2.500 2.500 0 0 1 5 0v6a2.500 2.500 0 0 1-5 0zM1 8v2.500C1 12.500 3 13.500 6 13.500s5-1 5-3V8M6 13.500v2.500M3.500 16h5" stroke="#222" strokeWidth="1.100" />
        </Svg>
      </div>
      <Svg w={17} h={16} className="ml-[15px]">
        <path d="M1 0v3h11V0M1 16v-3h11v3M1 5.500h11v5H1zM15.500 0v3M15.500 8v8" stroke="#fff" strokeWidth="1.100" />
        <path d="M14 4h3v3h-3z" fill="#fff" />
      </Svg>
      <Tile gap="ml-7">{chart}</Tile>
      <Tile gap="ml-[19px]">{hat}</Tile>
      <Tile gap="ml-[19px]">{hat}</Tile>
      <Tile gap="ml-[19px]">{hook}</Tile>
      <Tile gap="ml-[19px]">{boot}</Tile>
      <Tile gap="ml-[19px]">{hat}</Tile>
      <Tile gap="ml-[18px]">{plate}</Tile>
      <Tile gap="ml-[18px]">{hook}</Tile>
      <div className="ml-2.5 flex h-10 w-[41px] items-center justify-center border-b-2 border-[#76b9ed] bg-[#60563f]">
        <Svg w={20} h={21} className="-ml-px">
          <path d="M0 9.500C1 3.500 5 0 10.500 0 16 0 20 4 20 9.500v2.800H7c.200 3 2.800 4.700 6 4.700 2.300 0 4.200-.600 5.800-1.500v4c-2 1-4.300 1.500-6.800 1.500-5.500 0-9-3.300-9-8 0-3 1.500-5.500 4.300-7C4 6.300 1.500 7.500 0 9.500zM7.200 8.500h7c0-2.300-1.200-3.700-3.400-3.700-2 0-3.300 1.500-3.600 3.700z" fill="#0078d7" />
        </Svg>
      </div>
      <Tile gap="ml-[9px]">{chat}</Tile>
      <Tile gap="ml-[18px]">{doc}</Tile>
      <Tile gap="ml-[18px]">{wave}</Tile>
      <Tile gap="ml-[18px]">{hat}</Tile>
      <Tile gap="ml-[18px]">{hat}</Tile>
      <Tile gap="ml-[18px]">{hat}</Tile>
      <Svg w={15} h={16} className="ml-[34px]">
        <g stroke="#fff" strokeWidth="1.200">
          <circle cx="5" cy="7" r="2.800" /><circle cx="10.500" cy="3.500" r="2.800" />
          <path d="M.500 15c0-3 2-5 4.500-5s3.500 2 3.500 4M8 8.500c2.500-3 6-2 6 2" />
        </g>
      </Svg>
      <Svg w={13} h={8} className="ml-[22px]"><path d="M.7 7.300l5.800-6 5.800 6" stroke="#fff" strokeWidth="1.300" /></Svg>
      <Svg w={12} h={12} className="ml-[13px] mt-1">
        <circle cx="10" cy="10.500" r="1.400" fill="#fff" />
        <path d="M6.500 11.500a4 4 0 0 1 5-5M4 11.500a7 7 0 0 1 7.500-7.500" stroke="#fff" strokeWidth="1.100" />
        <path d="M1 11.500A10 10 0 0 1 11.500 1" stroke="#999" strokeWidth="1.100" />
      </Svg>
      <Svg w={17} h={14} className="ml-[9px]">
        <path d="M.600 4.800h2.500L6.500 1.500v11L3.100 9.200H.600zM8.500 4.500q1.500 2.500 0 5M11 3q2.500 4 0 8M13.500 1.500q4 5.500 0 11" stroke="#fff" strokeWidth="1.100" />
      </Svg>
      <Fit w={23} className="ml-[9px] text-[12px]">ENG</Fit>
      <div className="ml-[13px] flex w-[58px] flex-col items-center text-[12px] leading-[18px]">
        <Fit w={27}>12:46</Fit>
        <Fit w={58}>23/02/2019</Fit>
      </div>
      <Svg w={25} h={26} className="ml-[17px] mt-[5px]">
        <path d="M1 1h16v12H9l-3 3.500V13H1z" fill="#fff" />
        <path d="M3.500 4.500h11M3.500 7h11M3.500 9.500h7" stroke="#352807" />
        <circle cx="16.500" cy="16.500" r="7.700" fill="#3a3a3a" stroke="#777" />
        <text x="16.500" y="20.700" fontSize="12" fontWeight="500" textAnchor="middle" fill="#fff" fontFamily="Noto Sans, sans-serif">2</text>
      </Svg>
      <div className="ml-auto mr-1 h-full w-px bg-[#7a7050]" />
    </div>
  );
}

/* ---------- Notes around the window ---------- */

function Note({ w, children }: { w: number; children: string }) {
  return <Fit w={w} className="h-5 leading-5 -skew-x-12">{children}</Fit>;
}

function Arrow({ w, children }: { w: number; children: string }) {
  return (
    <div className="flex h-5 items-center">
      <Fit w={16} className="font-light">{"->"}</Fit>
      <div className="w-[7px]" />
      <Note w={w}>{children}</Note>
    </div>
  );
}

export default function App() {
  return (
    <div className="flex h-[1228px] w-[1760px] flex-col overflow-hidden font-['Noto_Sans',sans-serif]">
      <div className="flex h-[768px]">
        <div className="flex w-[1366px] flex-col bg-[#f1f1f1]">
          <TitleBar />
          <AddressRow />
          <div className="flex h-[33px] items-center border-b border-[#c6c6c6] pl-2.5 pt-px">
            <Bookmark w={101} gap="">C_TradeAgreement</Bookmark>
            <Bookmark w={91} gap="ml-[14px]">C_FoinySpectacle</Bookmark>
            <Bookmark w={43} gap="ml-[14px]">A_TELE2</Bookmark>
            <Bookmark w={113} gap="ml-[15px]">A_SembioneFarout[]⊦</Bookmark>
          </div>
          <BingHeader />
          <MapArea />
          <PageFooter />
          <Taskbar />
        </div>
        <div className="flex w-[394px] flex-col bg-[#fff200] pl-[47px] pt-8 text-[15px] text-[#ed1c24]">
          <Arrow w={59}>Sapporo</Arrow>
          <Arrow w={66}>Hokkaido</Arrow>
          <Arrow w={47}>Sendai</Arrow>
          <div className="h-[60px]" />
          <Arrow w={43}>Osaka</Arrow>
          <Arrow w={60}>Okinawa</Arrow>
          <div className="h-[60px]" />
          <Arrow w={71}>Hiroshima</Arrow>
          <Arrow w={64}>Nagasaki</Arrow>
          <div className="h-[60px]" />
          <Arrow w={43}>Tokyo</Arrow>
        </div>
      </div>
      <div className="flex h-[188px] items-start bg-[#b5e61d] pl-[134px] pt-[52px] text-[15px] text-[#ed1c24]">
        <Note w={22}>Art</Note>
        <div className="w-[26px]" />
        <Note w={97}>EnglishDrama</Note>
        <div className="w-[47px]" />
        <Note w={37}>Sport</Note>
        <div className="w-[58px]" />
        <Note w={58}>Farming</Note>
        <div className="w-[38px]" />
        <Note w={60}>Kitchens</Note>
        <div className="w-[36px]" />
        <Note w={55}>Knitting</Note>
      </div>
      <div className="relative flex h-[272px] bg-[#99d9ea] text-[15px]">
        <div className="ml-[99px] mt-[54px] w-[308px] text-[#ed1c24]">
          <Arrow w={108}>BloombergCAC</Arrow>
          <Arrow w={107}>BloombergUSD</Arrow>
          <Arrow w={60}>Soybean</Arrow>
          <Arrow w={59}>LMEIron</Arrow>
        </div>
        <div className="mt-[47px] text-black">
          <Arrow w={105}>LuckyDatabase</Arrow>
          <Arrow w={109}>SwissArmyKnife</Arrow>
          <Arrow w={73}>JesusMars</Arrow>
        </div>
        <svg className="absolute left-0 top-0" width="400" height="272" viewBox="0 956 400 272" fill="none" stroke="#000" strokeLinecap="round">
          <ellipse cx="214" cy="1043.500" rx="35" ry="25.500" strokeWidth="4.500" />
          <path d="M366.500 987.500V1088M365.500 1091v99.500" strokeWidth="5" />
        </svg>
      </div>
    </div>
  );
}
